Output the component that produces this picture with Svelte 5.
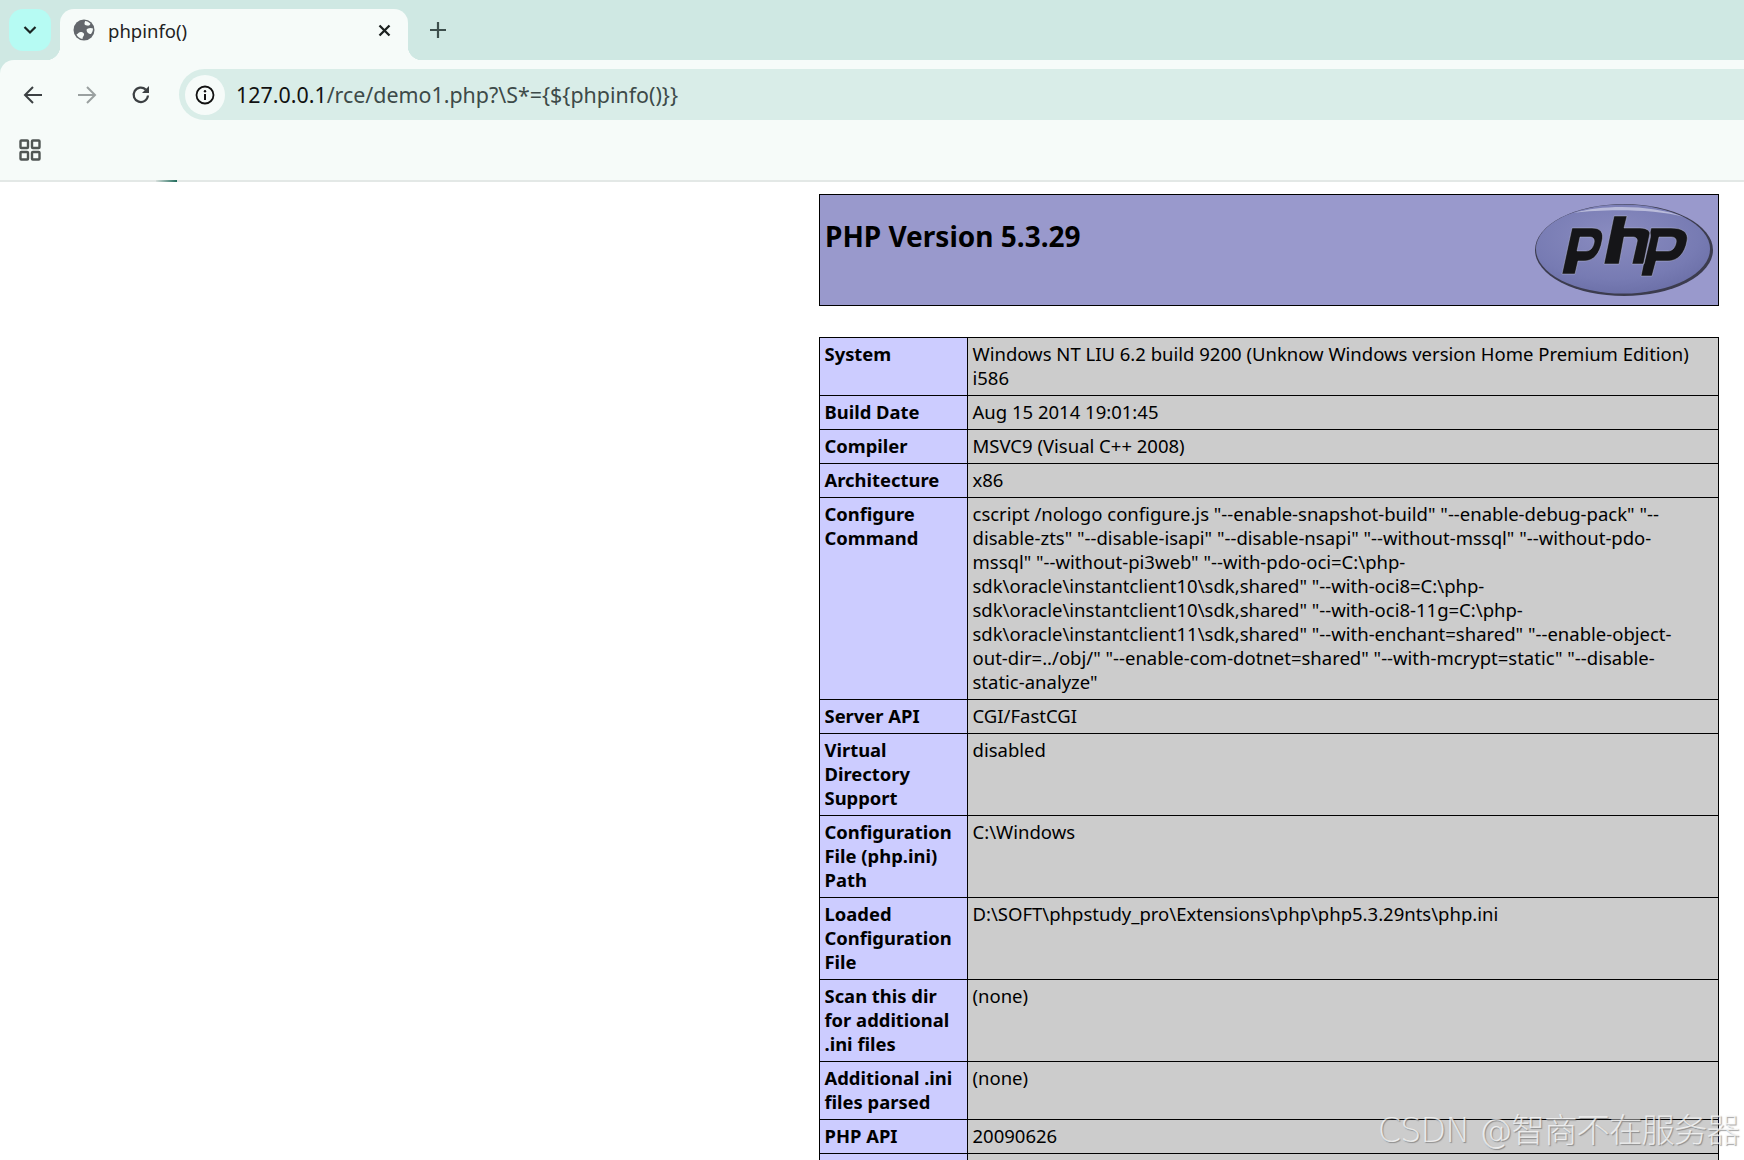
<script>
  const rows = [
    ['System', 'Windows NT LIU 6.2 build 9200 (Unknow Windows version Home Premium Edition)\ni586'],
    ['Build Date', 'Aug 15 2014 19:01:45'],
    ['Compiler', 'MSVC9 (Visual C++ 2008)'],
    ['Architecture', 'x86'],
    ['Configure Command', 'cscript /nologo configure.js "--enable-snapshot-build" "--enable-debug-pack" "--\ndisable-zts" "--disable-isapi" "--disable-nsapi" "--without-mssql" "--without-pdo-\nmssql" "--without-pi3web" "--with-pdo-oci=C:\\php-\nsdk\\oracle\\instantclient10\\sdk,shared" "--with-oci8=C:\\php-\nsdk\\oracle\\instantclient10\\sdk,shared" "--with-oci8-11g=C:\\php-\nsdk\\oracle\\instantclient11\\sdk,shared" "--with-enchant=shared" "--enable-object-\nout-dir=../obj/" "--enable-com-dotnet=shared" "--with-mcrypt=static" "--disable-\nstatic-analyze"'],
    ['Server API', 'CGI/FastCGI'],
    ['Virtual Directory Support', 'disabled'],
    ['Configuration File (php.ini) Path', 'C:\\Windows'],
    ['Loaded Configuration File', 'D:\\SOFT\\phpstudy_pro\\Extensions\\php\\php5.3.29nts\\php.ini'],
    ['Scan this dir for additional .ini files', '(none)'],
    ['Additional .ini files parsed', '(none)'],
    ['PHP API', '20090626'],
    ['', ''],
  ];
</script>

<div class="window">
  <header class="chrome">
    <div class="tabstrip">
      <button class="tabsearch" aria-label="Search tabs">
        <svg width="14" height="10" viewBox="0 0 14 10"><path d="M1.5 2l5.5 5.5L12.5 2" fill="none" stroke="#1a2422" stroke-width="2.2"/></svg>
      </button>
      <div class="tab">
        <svg class="globe" width="22" height="22" viewBox="0 0 22 22">
          <circle cx="11" cy="11" r="10.5" fill="#63676c"/>
          <path d="M3.5 15.5c2-1.5 3-3 5-2.5s3 1.5 2.5 3-1.5 2-1.5 4c-2.500-.3-4.800-2.200-6-4.500zM12 2c2 .2 4 1.200 5.500 2.700-.5 1.500-2 2.300-3.500 1.800s-2.500-.5-2.500-1.800.5-1.700.5-2.700zM14 10c2-1 4-1.500 6-.5 0 2-.8 4-2 5.500-1.500 0-3-.5-3.800-2-.6-1-.8-2.300-.2-3z" fill="#f6fbf9"/>
        </svg>
        <span class="tabtitle">phpinfo()</span>
        <svg class="close" width="13" height="13" viewBox="0 0 13 13"><path d="M1.500 1.500l10 10M11.500 1.500l-10 10" stroke="#1c2120" stroke-width="2.300"/></svg>
      </div>
      <svg class="plus" width="16" height="16" viewBox="0 0 16 16"><path d="M8 0v16M0 8h16" stroke="#3d4f4c" stroke-width="2.200"/></svg>
    </div>
    <div class="bar">
      <div class="toolbar">
        <svg width="22" height="22" viewBox="0 0 22 22"><path d="M20 11H3M11 3l-8 8 8 8" fill="none" stroke="#3c4043" stroke-width="2"/></svg>
        <svg width="22" height="22" viewBox="0 0 22 22"><path d="M2 11h17M11 3l8 8-8 8" fill="none" stroke="#9aa0a0" stroke-width="2"/></svg>
        <svg width="22" height="22" viewBox="0 0 22 22"><path d="M18 11.500A7.200 7.200 0 1 1 15.800 5.600" fill="none" stroke="#3c4043" stroke-width="2.200"/><path d="M19 2v7h-7z" fill="#3c4043"/></svg>
        <div class="omnibox">
          <span class="info">
            <svg width="22" height="22" viewBox="0 0 22 22"><circle cx="11" cy="11" r="8.500" fill="none" stroke="#111" stroke-width="1.800"/><path d="M11 10v6" stroke="#111" stroke-width="2"/><circle cx="11" cy="7.300" r="1.200" fill="#111"/></svg>
          </span>
          <span class="url"><span class="host">127.0.0.1</span>/rce/demo1.php?\S*={'{'}${'{'}phpinfo(){'}'}{'}'}</span>
        </div>
      </div>
      <div class="bookmarks">
        <svg width="24" height="24" viewBox="0 0 24 24"><g fill="none" stroke="#505654" stroke-width="2.400"><rect x="2.500" y="2.500" width="7.500" height="7.500" rx="0.800"/><rect x="14" y="2.500" width="7.500" height="7.500" rx="0.800"/><rect x="2.500" y="14" width="7.500" height="7.500" rx="0.800"/><rect x="14" y="14" width="7.500" height="7.500" rx="0.800"/></g></svg>
      </div>
    </div>
  </header>

  <main class="page">
    <div class="sliver"></div>
    <div class="col">
      <div class="banner">
        <h1>PHP Version 5.3.29</h1>
        <svg class="logo" width="180" height="94" viewBox="0 0 180 94">
          <defs>
            <radialGradient id="eg" cx="45%" cy="35%" r="70%"><stop offset="0" stop-color="#8a8cc0"/><stop offset="0.7" stop-color="#777bb3"/><stop offset="1" stop-color="#6a6ea6"/></radialGradient>
          </defs>
          <ellipse cx="90" cy="47" rx="89" ry="46" fill="#3c3c4e"/>
          <ellipse cx="89" cy="46" rx="87" ry="44.500" fill="url(#eg)"/>
          <path d="M40 10C70 1 120 2 150 14 120 6 70 6 40 10z" fill="#c9cbe4" opacity="0.8"/>
          <path fill="#151518" stroke="#c8c9e2" stroke-opacity="0.6" stroke-width="0.700" fill-rule="evenodd"
            d="M38 25H58C67 25 70 30 68 38 66 50 60 58 50 58H44L41 71H28zM46 34L43 48H52C56 48 59 45 60 40 61 36 59 34 56 34z
               M80 13H93L90 25H106C114 25 118 29 116 36L110 61H98L103 39C104 36 102 34 99 34H90L85 61H70z
               M117 25H137C148 25 155 29 153 38 151 50 144 58 134 58H122L118 73H107zM125 34L122 48H134C138 48 141 45 142 40 143 36 141 34 137 34z"/>
        </svg>
      </div>
      <table>
        <tbody>
          {#each rows as [k, v]}
            <tr><td class="k">{k}</td><td class="v">{v}</td></tr>
          {/each}
        </tbody>
      </table>
    </div>
  </main>
  <div class="mark">CSDN @智商不在服务器</div>
</div>

<style>
  :global(body) { margin: 0; background: #fff; overflow: hidden; }
  .window { position: relative; width: 1744px; height: 1160px; overflow: hidden; font-family: "Noto Sans", "Open Sans", sans-serif; }
  .chrome { background: #cfe8e3; height: 182px; }
  .tabstrip { height: 60px; display: flex; align-items: flex-start; padding: 9px 0 0 9px; box-sizing: border-box; }
  .tabsearch { width: 42px; height: 42px; margin-right: 9px; border: 0; padding: 0; border-radius: 14px; background: #b6fbf3; display: flex; align-items: center; justify-content: center; }
  .tab { position: relative; width: 348px; height: 51px; background: #f6fbf9; border-radius: 14px 14px 0 0; display: flex; align-items: center; padding: 0 17px 9px 13px; box-sizing: border-box; }
  .tab::before, .tab::after { content: ""; position: absolute; bottom: 0; width: 14px; height: 14px; }
  .tab::before { left: -14px; background: radial-gradient(circle at 0 0, transparent 14px, #f6fbf9 14.5px); }
  .tab::after { right: -14px; background: radial-gradient(circle at 100% 0, transparent 14px, #f6fbf9 14.5px); }
  .tabtitle { font-size: 18.500px; color: #222; margin-left: 13px; flex: 1; }
  .plus { margin: 13px 0 0 22px; }
  .bar { background: #f6fbf9; border-radius: 14px 0 0 0; height: 120px; border-bottom: 2px solid #e3e8e6; }
  .toolbar { height: 69px; display: flex; align-items: center; gap: 32px; padding-left: 22px; }
  .omnibox { flex: 1; height: 51px; margin-left: -5px; background: #d9ede8; border-radius: 26px 0 0 26px; display: flex; align-items: center; padding-left: 6px; }
  .info { width: 40px; height: 40px; border-radius: 50%; background: #f6fbf9; display: flex; align-items: center; justify-content: center; }
  .url { margin-left: 11px; font-size: 21.400px; color: #3d4a48; white-space: nowrap; }
  .host { color: #111; }
  .bookmarks { height: 51px; padding: 9px 0 0 18px; box-sizing: border-box; }
  .page { position: relative; padding: 12px 0 0 819px; }
  .sliver { position: absolute; left: 156px; top: -2px; width: 21px; height: 2px; background: linear-gradient(90deg, #d5dedb, #1f6a5a); }
  .col { width: 900px; }
  .banner { height: 112px; background: #9999cc; border: 1px solid #000; box-sizing: border-box; display: flex; justify-content: space-between; padding: 0 4px 0 5px; margin-bottom: 31px; }
  h1 { margin: 22px 0 0; font-size: 28px; font-weight: 700; color: #000; line-height: 38px; }
  .logo { margin-top: 8px; }
  table { border-collapse: collapse; width: 900px; table-layout: fixed; font-size: 18.500px; line-height: 24px; color: #000; }
  td { border: 1px solid #000; padding: 4px 4.500px 5px; vertical-align: top; }
  .k { width: 138px; background: #ccccff; font-weight: 700; font-size: 18.400px; }
  .v { background: #cccccc; white-space: pre-line; }
  .mark { position: absolute; right: 5px; top: 1103px; font-size: 33.500px; color: rgba(255,255,255,0.72); text-shadow: 1px 1px 1px rgba(90,90,90,0.55); font-family: "DejaVu Sans", "Noto Sans CJK SC", sans-serif; white-space: nowrap; font-weight: 300; letter-spacing: -1px; }
</style>
